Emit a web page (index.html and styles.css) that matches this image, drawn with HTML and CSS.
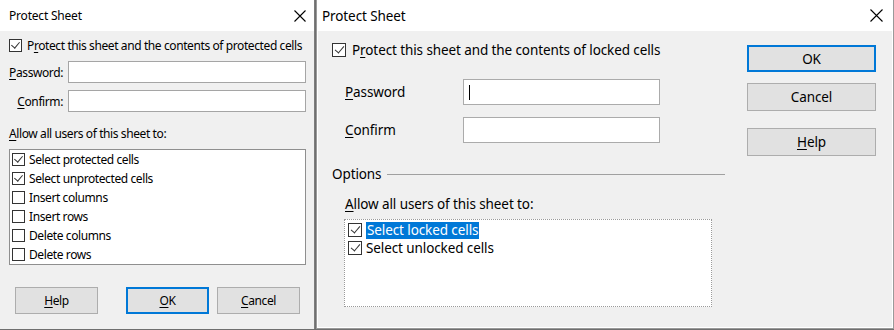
FILE: index.html
```html
<!DOCTYPE html>
<html>
<head>
<meta charset="utf-8">
<link rel="stylesheet" href="styles.css">
</head>
<body>
<div class="screen">
  <div class="dlg dlg-left">
    <div class="titlebar">
      <span class="title">Protect Sheet</span>
      <svg class="close" width="12" height="12" viewBox="0 0 12 12"><path d="M0.5 0.5 L11.5 11.5 M11.5 0.5 L0.5 11.5" stroke="#000" stroke-width="1.1" fill="none"/></svg>
    </div>
    <div class="lbody">
      <div class="chk-row main-chk"><span class="cb on"></span><span>P<u>r</u>otect this sheet and the contents of protected cells</span></div>
      <div class="fields">
        <span class="flabel"><u>P</u>assword:</span><span class="input"></span>
        <span class="flabel"><u>C</u>onfirm:</span><span class="input"></span>
      </div>
      <div class="allow"><u>A</u>llow all users of this sheet to:</div>
      <div class="list">
        <div class="chk-row item"><span class="cb on"></span><span>Select protected cells</span></div>
        <div class="chk-row item"><span class="cb on"></span><span>Select unprotected cells</span></div>
        <div class="chk-row item"><span class="cb"></span><span>Insert columns</span></div>
        <div class="chk-row item"><span class="cb"></span><span>Insert rows</span></div>
        <div class="chk-row item"><span class="cb"></span><span>Delete columns</span></div>
        <div class="chk-row item"><span class="cb"></span><span>Delete rows</span></div>
      </div>
      <div class="lbuttons">
        <span class="btn"><u>H</u>elp</span>
        <span class="btn default"><u>O</u>K</span>
        <span class="btn"><u>C</u>ancel</span>
      </div>
    </div>
  </div>
  <div class="dlg dlg-right">
    <div class="titlebar rtitlebar">
      <span class="title rtitle">Protect Sheet</span>
      <svg class="close" width="13" height="13" viewBox="0 0 13 13"><path d="M0.5 0.5 L12.5 12.5 M12.5 0.5 L0.5 12.5" stroke="#000" stroke-width="1.1" fill="none"/></svg>
    </div>
    <div class="rbody">
      <div class="rmain">
        <div class="chk-row rchk"><span class="cb rcb on"></span><span>P<u>r</u>otect this sheet and the contents of locked cells</span></div>
        <div class="rfields">
          <span class="rlabel"><u>P</u>assword</span><span class="rinput"><span class="caret"></span></span>
          <span class="rlabel"><u>C</u>onfirm</span><span class="rinput"></span>
        </div>
        <div class="options"><span>Options</span><span class="sep"></span></div>
        <div class="rallow"><u>A</u>llow all users of this sheet to:</div>
        <div class="rlist">
          <div class="chk-row ritem"><span class="cb rcb on"></span><span class="sel">Select locked cells</span></div>
          <div class="chk-row ritem"><span class="cb rcb on"></span><span>Select unlocked cells</span></div>
        </div>
      </div>
      <div class="rbuttons">
        <span class="btn rbtn default">OK</span>
        <span class="btn rbtn">Cancel</span>
        <span class="btn rbtn help"><u>H</u>elp</span>
      </div>
    </div>
  </div>
</div>
</body>
</html>
```

FILE: styles.css
```css
* { box-sizing: border-box; }
html, body { margin: 0; padding: 0; }
body {
  width: 894px;
  height: 330px;
  overflow: hidden;
  background: #6f6f6f;
  font-family: "Noto Sans", "DejaVu Sans", sans-serif;
  color: #000;
}
u { text-decoration: underline; text-underline-offset: 2px; text-decoration-thickness: 1px; }
.screen {
  display: flex;
  gap: 1px;
  height: 330px;
}
.dlg {
  background: #f0f0f0;
  display: flex;
  flex-direction: column;
  height: 329px;
}
.dlg-left {
  width: 315px;
  border-right: 1px solid #7d7d7d;
}
.dlg-right {
  width: 578px;
  border: 1px solid #9a9a9a;
  border-top: none;
  box-shadow: inset 1px 0 0 #fff, inset -1px 0 0 #fff, inset 0 -1px 0 #fff;
}
.titlebar {
  height: 31px;
  background: #fff;
  display: flex;
  align-items: center;
  justify-content: space-between;
  padding: 0 8px 0 9px;
  flex: none;
}
.title { font-size: 12px; letter-spacing: -0.2px; }
.rtitlebar { padding: 0 10px 0 5px; }
.rtitle { font-size: 13.5px; letter-spacing: -0.1px; }
.close { display: block; }

/* checkboxes */
.chk-row { display: flex; align-items: center; }
.cb {
  width: 13px; height: 13px;
  border: 1px solid #333;
  background: #fff;
  flex: none;
  position: relative;
  margin-right: 5px;
}
.cb.on::after {
  content: "";
  position: absolute;
  left: 3px; top: 0px;
  width: 4px; height: 7px;
  border: solid #333;
  border-width: 0 1px 1px 0;
  transform: rotate(40deg);
}

/* left dialog */
.lbody {
  padding: 8px 8px 0 9px;
  font-size: 12px;
  letter-spacing: -0.4px;
  flex: 1;
  display: flex;
  flex-direction: column;
}
.main-chk { height: 13px; white-space: nowrap; }
.main-chk .cb { margin-right: 5px; }
.fields {
  margin-top: 9px;
  display: grid;
  grid-template-columns: 54px 238px;
  column-gap: 5px;
  row-gap: 7px;
}
.flabel { text-align: right; align-self: center; }
.input {
  height: 22px;
  background: #fff;
  border: 1px solid #a5a5a5;
}
.allow { margin-top: 14px; line-height: 16px; }
.list {
  margin-top: 7px;
  width: 297px;
  height: 116px;
  background: #fff;
  border: 1px solid #8f8f8f;
  padding: 0 0 0 2px;
}
.item { height: 19px; }
.item .cb { margin-right: 4px; }
.lbuttons {
  margin-top: 22px;
  display: flex;
  padding-left: 6px;
}
.btn {
  display: flex;
  align-items: center;
  justify-content: center;
  width: 83px;
  height: 27px;
  background: #e1e1e1;
  border: 1px solid #adadad;
  font-size: 12px;
}
.lbuttons .btn:nth-child(2) { margin-left: 28px; }
.lbuttons .btn:nth-child(3) { margin-left: 8px; }
.btn.default { border: 2px solid #0078d7; }

/* right dialog */
.rbody {
  flex: 1;
  display: flex;
  padding: 12px 0 0 15px;
  font-size: 13.5px;
  letter-spacing: -0.1px;
}
.rmain { width: 393px; display: flex; flex-direction: column; }
.rcb { width: 14px; height: 14px; }
.rcb.on::after { left: 4px; top: 0px; width: 4px; height: 8px; border-width: 0 1.3px 1.3px 0; }
.rchk { height: 14px; white-space: nowrap; }
.rchk .cb { margin-right: 6px; }
.rfields {
  margin-top: 22px;
  padding-left: 13px;
  display: grid;
  grid-template-columns: 118px 197px;
  row-gap: 12px;
}
.rlabel { align-self: center; }
.rinput {
  height: 26px;
  background: #fff;
  border: 1px solid #ababab;
  position: relative;
}
.caret {
  position: absolute;
  left: 5px; top: 5px;
  width: 1px; height: 15px;
  background: #000;
}
.options {
  margin-top: 22px;
  display: flex;
  align-items: center;
  height: 18px;
}
.sep { flex: 1; height: 1px; background: #a0a0a0; margin-left: 6px; }
.rallow { margin-top: 12px; padding-left: 13px; line-height: 18px; }
.rlist {
  margin-top: 6px;
  margin-left: 12px;
  width: 368px;
  height: 88px;
  background: #fff;
  border: 1px dotted #9a9a9a;
  padding: 1px 0 0 3px;
}
.ritem { height: 18px; }
.ritem .cb { margin-right: 4px; }
.sel { background: #0078d7; color: #fff; padding: 0 1px; line-height: 17px; }
.rbuttons {
  margin-left: 22px;
  margin-top: 2px;
  display: flex;
  flex-direction: column;
}
.rbtn { width: 129px; font-size: 13.5px; }
.rbtn.default { height: 27px; }
.rbtn:nth-child(2) { margin-top: 11px; height: 28px; }
.rbtn.help { margin-top: 17px; height: 28px; }
```
